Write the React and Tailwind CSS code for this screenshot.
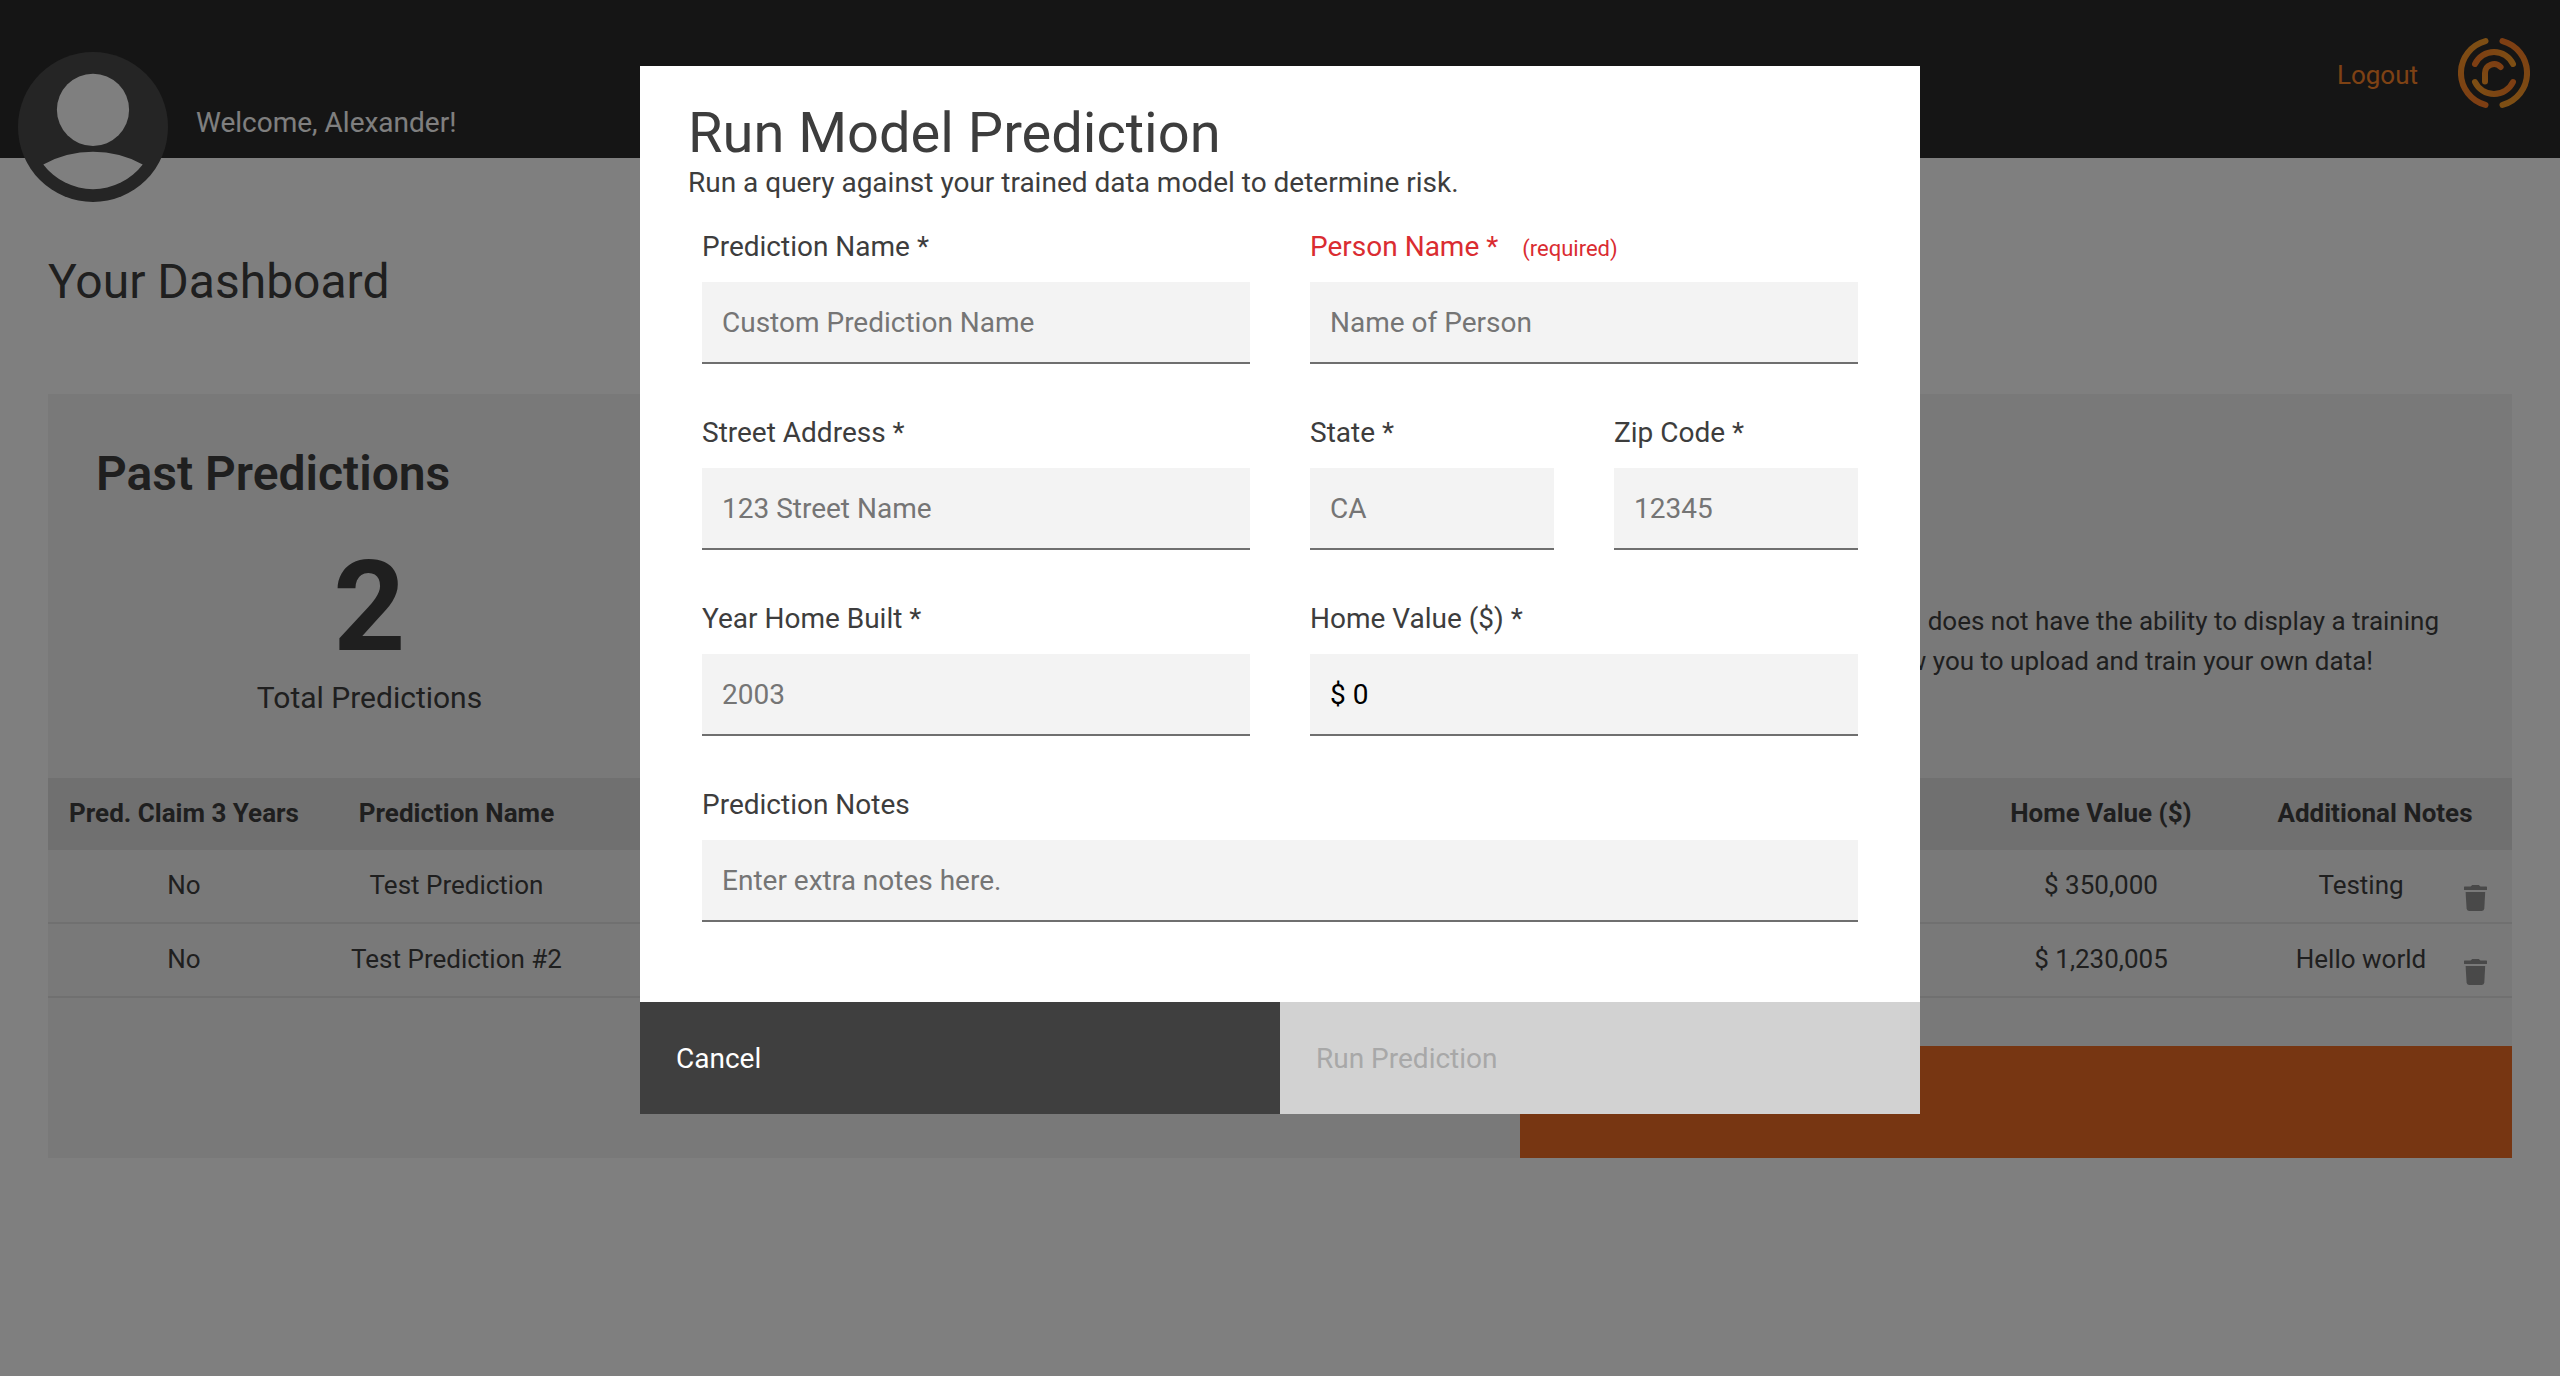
import React from "react";

function Avatar() {
  return (
    <svg className="mt-[52px] h-[150px] w-[150px] shrink-0" viewBox="0 0 150 150">
      <circle cx="75" cy="75" r="75" fill="#4a4a4a" />
      <circle cx="75" cy="57.8" r="36.1" fill="#ffffff" />
      <path d="M25.3 112.4A104 104 0 0 1 124.7 112.4A62.3 62.3 0 0 1 25.3 112.4Z" fill="#ffffff" />
    </svg>
  );
}

function Logo() {
  return (
    <svg className="mt-[37px] ml-10 h-[72px] w-[72px] shrink-0" viewBox="0 0 72 72" fill="none" strokeWidth="6" strokeLinecap="round">
      <defs>
        <linearGradient id="down" gradientUnits="userSpaceOnUse" x1="0" y1="3" x2="0" y2="69">
          <stop offset="0" stopColor="#fa9e28" />
          <stop offset="1" stopColor="#fc7c26" />
        </linearGradient>
        <linearGradient id="up" gradientUnits="userSpaceOnUse" x1="0" y1="3" x2="0" y2="69">
          <stop offset="0" stopColor="#fc7c26" />
          <stop offset="1" stopColor="#fa9e28" />
        </linearGradient>
        <linearGradient id="right" gradientUnits="userSpaceOnUse" x1="16" y1="0" x2="56" y2="0">
          <stop offset="0" stopColor="#fc7c26" />
          <stop offset="1" stopColor="#fa9e28" />
        </linearGradient>
        <linearGradient id="left" gradientUnits="userSpaceOnUse" x1="16" y1="0" x2="56" y2="0">
          <stop offset="0" stopColor="#fa9e28" />
          <stop offset="1" stopColor="#fc7c26" />
        </linearGradient>
        <linearGradient id="stem" gradientUnits="userSpaceOnUse" x1="27" y1="46" x2="42" y2="27">
          <stop offset="0" stopColor="#fa9828" />
          <stop offset="1" stopColor="#fc7c26" />
        </linearGradient>
      </defs>
      <path d="M27.5 4.1A33 33 0 0 0 27.5 67.9" stroke="url(#down)" />
      <path d="M44.5 4.1A33 33 0 0 1 44.5 67.9" stroke="url(#up)" />
      <path d="M17 27A21 21 0 0 1 55 27" stroke="url(#right)" />
      <path d="M17 45A21 21 0 0 0 55 45" stroke="url(#left)" />
      <path d="M27 44.5V36A9 9 0 0 1 42.6 30" stroke="url(#stem)" />
    </svg>
  );
}

function Trash() {
  return (
    <svg className="absolute top-[35px] right-[25px] h-[26px] w-[23px]" viewBox="0 0 23 26" fill="#929292">
      <path d="M.6 1.6H6.6L8.2 .1H14.8L16.4 1.6H22.4Q23 1.6 23 2.2V4.4Q23 5 22.4 5H.6Q0 5 0 4.4V2.2Q0 1.6 .6 1.6Z" />
      <path d="M1.6 7H21.2L20.3 23.6Q20.1 26 17.8 26H5Q2.8 26 2.6 23.6Z" />
    </svg>
  );
}

function Field({ label, placeholder, value, required, className = "" }) {
  return (
    <div className={"flex min-w-0 flex-col " + className}>
      <label className={"flex items-baseline text-[28px] leading-[33px] whitespace-nowrap " + (required ? "text-[#da2c31]" : "text-[#3d3d3d]")}>
        {label}
        {required && <span className="ml-6 text-[22px] leading-[26px]">(required)</span>}
      </label>
      <input
        className="mt-[19px] h-[82px] w-full border-b-2 border-[#6f6f6f] bg-[#f3f3f3] px-5 text-[28px] leading-[33px] text-black outline-none placeholder:text-[#757575]"
        placeholder={placeholder}
        defaultValue={value}
      />
    </div>
  );
}

const rows = [
  { claim: "No", name: "Test Prediction", value: "$ 350,000", notes: "Testing" },
  { claim: "No", name: "Test Prediction #2", value: "$ 1,230,005", notes: "Hello world" },
];

function Modal() {
  return (
    <div className="fixed inset-0 flex items-start justify-center bg-black/50">
      <div className="mt-[66px] flex h-[1048px] w-[1280px] flex-col bg-white">
        <div className="flex grow flex-col px-12 pt-[34px] text-[#3d3d3d]">
          <h2 className="text-[56px] leading-[66px]">Run Model Prediction</h2>
          <p className="text-[28px] leading-[33px]">Run a query against your trained data model to determine risk.</p>
          <div className="mt-[31px] grid grid-cols-[548px_244px_244px] gap-x-[60px] gap-y-[52px] px-[14px]">
            <Field label="Prediction Name *" placeholder="Custom Prediction Name" />
            <Field label="Person Name *" placeholder="Name of Person" required className="col-span-2" />
            <Field label="Street Address *" placeholder="123 Street Name" />
            <Field label="State *" placeholder="CA" />
            <Field label="Zip Code *" placeholder="12345" />
            <Field label="Year Home Built *" placeholder="2003" />
            <Field label="Home Value ($) *" value="$ 0" className="col-span-2" />
            <Field label="Prediction Notes" placeholder="Enter extra notes here." className="col-span-3" />
          </div>
        </div>
        <div className="flex h-28 text-[28px] leading-[33px]">
          <button className="flex w-1/2 items-start bg-[#3f3f3f] px-9 pt-10 text-white">Cancel</button>
          <button className="flex w-1/2 items-start bg-[#d2d2d2] px-9 pt-10 text-[#a8a8a8]">Run Prediction</button>
        </div>
      </div>
    </div>
  );
}

export default function App() {
  return (
    <div className="h-[1376px] w-[2560px] overflow-hidden bg-white font-[Roboto,sans-serif] text-[#3f3f3f]">
      <header className="flex h-[158px] items-start bg-[#2a2a2a] pr-[30px] pl-[18px]">
        <Avatar />
        <p className="mt-[106px] ml-7 grow text-[28px] leading-[33px] text-white">Welcome, Alexander!</p>
        <a className="mt-[60px] text-[26px] leading-[30px] text-[#fc8428]">Logout</a>
        <Logo />
      </header>
      <main className="px-12 pt-[95px]">
        <h1 className="text-[48px] leading-[57px]">Your Dashboard</h1>
        <section className="mt-[84px] flex flex-col bg-[#f2f2f2]">
          <div className="flex h-[384px] justify-between px-12 pt-[51px]">
            <div className="flex w-[547px] flex-col">
              <h2 className="text-[48px] leading-[57px] font-semibold">Past Predictions</h2>
              <div className="mt-8 flex flex-col items-center">
                <span className="text-[126px] leading-[146px] font-bold">2</span>
                <span className="text-[30px] leading-[35px]">Total Predictions</span>
              </div>
            </div>
            <div className="mt-[156px] mr-[25px] flex flex-col items-end text-[26px] leading-10">
              <span>does not have the ability to display a training</span>
              <span className="mr-[66px]">allow you to upload and train your own data!</span>
            </div>
          </div>
          <div className="text-center text-[26px] leading-[30px]">
            <div className="grid h-[72px] grid-cols-[272px_273px_1fr_274px_274px] bg-[#e0e0e0] pt-5 font-bold">
              <span>Pred. Claim 3 Years</span>
              <span>Prediction Name</span>
              <span />
              <span>Home Value ($)</span>
              <span>Additional Notes</span>
            </div>
            {rows.map((r) => (
              <div key={r.name} className="relative grid h-[74px] grid-cols-[272px_273px_1fr_274px_274px] border-b-2 border-[#e0e0e0] pt-5">
                <span>{r.claim}</span>
                <span>{r.name}</span>
                <span />
                <span>{r.value}</span>
                <span className="pr-7">{r.notes}</span>
                <Trash />
              </div>
            ))}
          </div>
          <button className="mt-12 h-28 w-[992px] self-end bg-[#ee6c24]" aria-label="Run prediction" />
        </section>
      </main>
      <Modal />
    </div>
  );
}
